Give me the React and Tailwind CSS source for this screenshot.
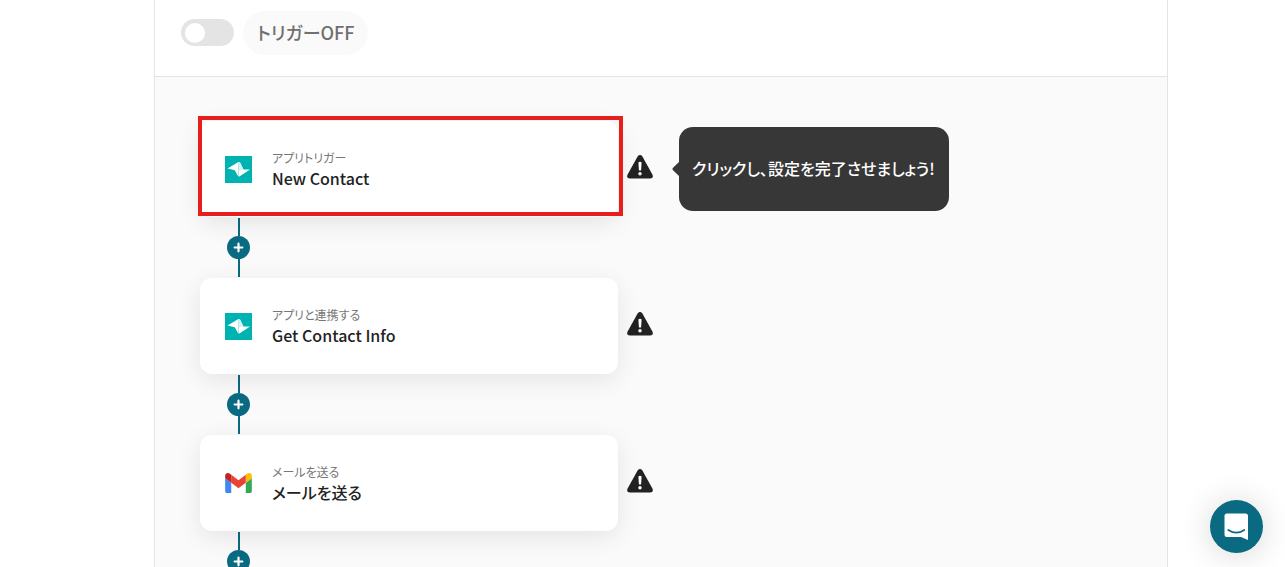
import { useState } from "react";

const steps = [
    { id: 1, app: "telenor", label: "アプリトリガー", title: "New Contact", selected: true, hint: "クリックし、設定を完了させましょう!" },
    { id: 2, app: "telenor", label: "アプリと連携する", title: "Get Contact Info" },
    { id: 3, app: "gmail", label: "メールを送る", title: "メールを送る" },
];

function BirdLogo() {
    return (
        <svg viewBox="0 0 27 27" className="size-[27px]" aria-hidden="true">
            <rect width="27" height="27" fill="#00b3b3" />
            <path d="M2.5 12.6 L12.6 6.4 Q14 5.4 15.2 6.8 L18.4 13.4 L25 13.4 L14.8 20.2 Q13.8 20.8 12.8 19.8 L9.8 14.2 Z" fill="#fff" />
            <path d="M13.5 6.5 V20" stroke="#9fe0e0" strokeWidth="0.8" />
            <path d="M13.9 14.6 L18.4 13.4 L15.2 6.8 L13.9 6.2 Z" fill="#d4f3f3" />
        </svg>
    );
}

function GmailLogo() {
    return (
        <svg viewBox="52 42 88 66" className="w-[27px] h-5" aria-hidden="true">
            <path fill="#4285f4" d="M58 108h14V74L52 59v43c0 3.32 2.69 6 6 6" />
            <path fill="#34a853" d="M120 108h14c3.32 0 6-2.69 6-6V59l-20 15" />
            <path fill="#fbbc04" d="M120 48v26l20-15v-8c0-7.42-8.47-11.65-14.4-7.2" />
            <path fill="#ea4335" d="M72 74V48l24 18 24-18v26L96 92" />
            <path fill="#c5221f" d="M52 51v8l20 15V48l-5.6-4.2c-5.94-4.45-14.4-.22-14.4 7.2" />
        </svg>
    );
}

function WarningIcon() {
    return (
        <svg viewBox="0 0 26 24" className="w-[26px] h-6" role="img" aria-label="設定が未完了です">
            <path d="M10.6 1.5 Q13 -1.4 15.4 1.5 L25.4 19.4 Q26.8 23.4 23 23.6 H3 Q-0.8 23.4 0.6 19.4 Z" fill="#222" />
            <path d="M11.4 7.4 Q13 6.2 14.6 7.4 L14.1 15.2 Q13 16 11.9 15.2 Z" fill="#fff" />
            <circle cx="13" cy="18.8" r="1.7" fill="#fff" />
        </svg>
    );
}

function Connector() {
    return (
        <div className="flex w-[77px] h-[61px] flex-col items-center">

            <div className="mt-px w-0.5 flex-1 bg-[#0a6a82]"></div>

            <button type="button" aria-label="ステップを追加" className="flex size-[23px] items-center justify-center rounded-full bg-[#0a6a82]">
                <svg viewBox="0 0 10 10" className="size-[11px]" aria-hidden="true">
                    <path d="M5 1.5 V8.5 M1.5 5 H8.5" stroke="#fff" strokeWidth="2" strokeLinecap="round" />
                </svg>
            </button>

            <div className="mb-px w-0.5 flex-1 bg-[#0a6a82]"></div>

        </div>
    );
}

function Step({ step }) {
    return (
        <div className="flex items-center">

            {/* Card */}
            <button type="button" className="relative flex h-24 w-[418px] items-center gap-5 rounded-xl bg-white pl-[25px] text-left shadow-[0_6px_24px_rgba(0,0,0,0.09)]">

                {step.selected && <span className="absolute -top-[5px] -right-[5px] bottom-px -left-0.5 border-4 border-[#e61e1e]"></span>}

                <span className="flex w-[27px] justify-center">
                    {step.app === "gmail" ? <GmailLogo /> : <BirdLogo />}
                </span>

                <span className="flex flex-col pb-[3px]">
                    <span className="text-xs leading-5 text-[#777]">{step.label}</span>
                    <span className="text-base leading-5 font-medium text-[#222]">{step.title}</span>
                </span>

            </button>

            <div className="mb-1 ml-[9px]">
                <WarningIcon />
            </div>

            {/* Hint */}
            {step.hint && (
                <div role="tooltip" className="ml-[19px] flex items-center">
                    <svg viewBox="0 0 7 14" className="h-3.5 w-[7px]" aria-hidden="true">
                        <path d="M7 0 V14 L0.8 8 Q0 7 0.8 6 Z" fill="#373737" />
                    </svg>
                    <div className="flex h-21 w-[270px] items-center rounded-[14px] bg-[#373737] pb-0.5 pl-[13px] font-medium whitespace-nowrap text-white">
                        {step.hint}
                    </div>
                </div>
            )}

        </div>
    );
}

export default function App() {

    const [active, setActive] = useState(false);

    return (
        <div className="h-screen overflow-hidden bg-white font-['Noto_Sans_CJK_JP',sans-serif] [font-feature-settings:'palt']">

            <main className="mr-[117px] ml-[154px] min-h-screen border-x border-[#e4e4e4] bg-[#fafafa]">

                {/* Trigger switch */}
                <div className="flex h-[77px] items-start gap-[9px] border-b border-[#e4e4e4] bg-white pt-[11px] pl-[26px]">

                    <label className="mt-2 flex h-[27px] w-[53px] cursor-pointer items-center rounded-full bg-[#e4e4e4] px-1 has-checked:justify-end has-checked:bg-[#0a6a82]">
                        <input
                            type="checkbox"
                            role="switch"
                            aria-label="トリガー"
                            className="sr-only"
                            checked={active}
                            onChange={(e) => setActive(e.target.checked)} />
                        <span className="size-5 rounded-full bg-white"></span>
                    </label>

                    <div className="rounded-full bg-[#fafafa] px-3.5 pb-0.5 text-lg leading-[42px] font-medium text-[#707070]">
                        {active ? "トリガーON" : "トリガーOFF"}
                    </div>

                </div>

                {/* Steps */}
                <div className="pt-11 pl-[45px]">
                    {steps.map((step) => (
                        <div key={step.id}>
                            <Step step={step} />
                            <Connector />
                        </div>
                    ))}
                </div>

            </main>

            {/* Chat */}
            <button type="button" aria-label="チャットを開く" className="fixed right-[22px] bottom-3.5 flex size-[53px] items-center justify-center rounded-full bg-[#0a6a82] shadow-[0_2px_32px_rgba(0,0,0,0.16)]">
                <svg viewBox="0 0 26 28" className="h-7 w-[26px]" aria-hidden="true">
                    <path d="M3 0.5 H21.5 Q24 0.5 24 3 V27 L17 24 H3 Q0.5 24 0.5 21.5 V3 Q0.5 0.5 3 0.5 Z" fill="#fff" />
                    <path d="M4.3 17 Q12.3 22.4 20.3 17" fill="none" stroke="#0a6a82" strokeWidth="1.8" strokeLinecap="round" />
                </svg>
            </button>

        </div>
    );
}
